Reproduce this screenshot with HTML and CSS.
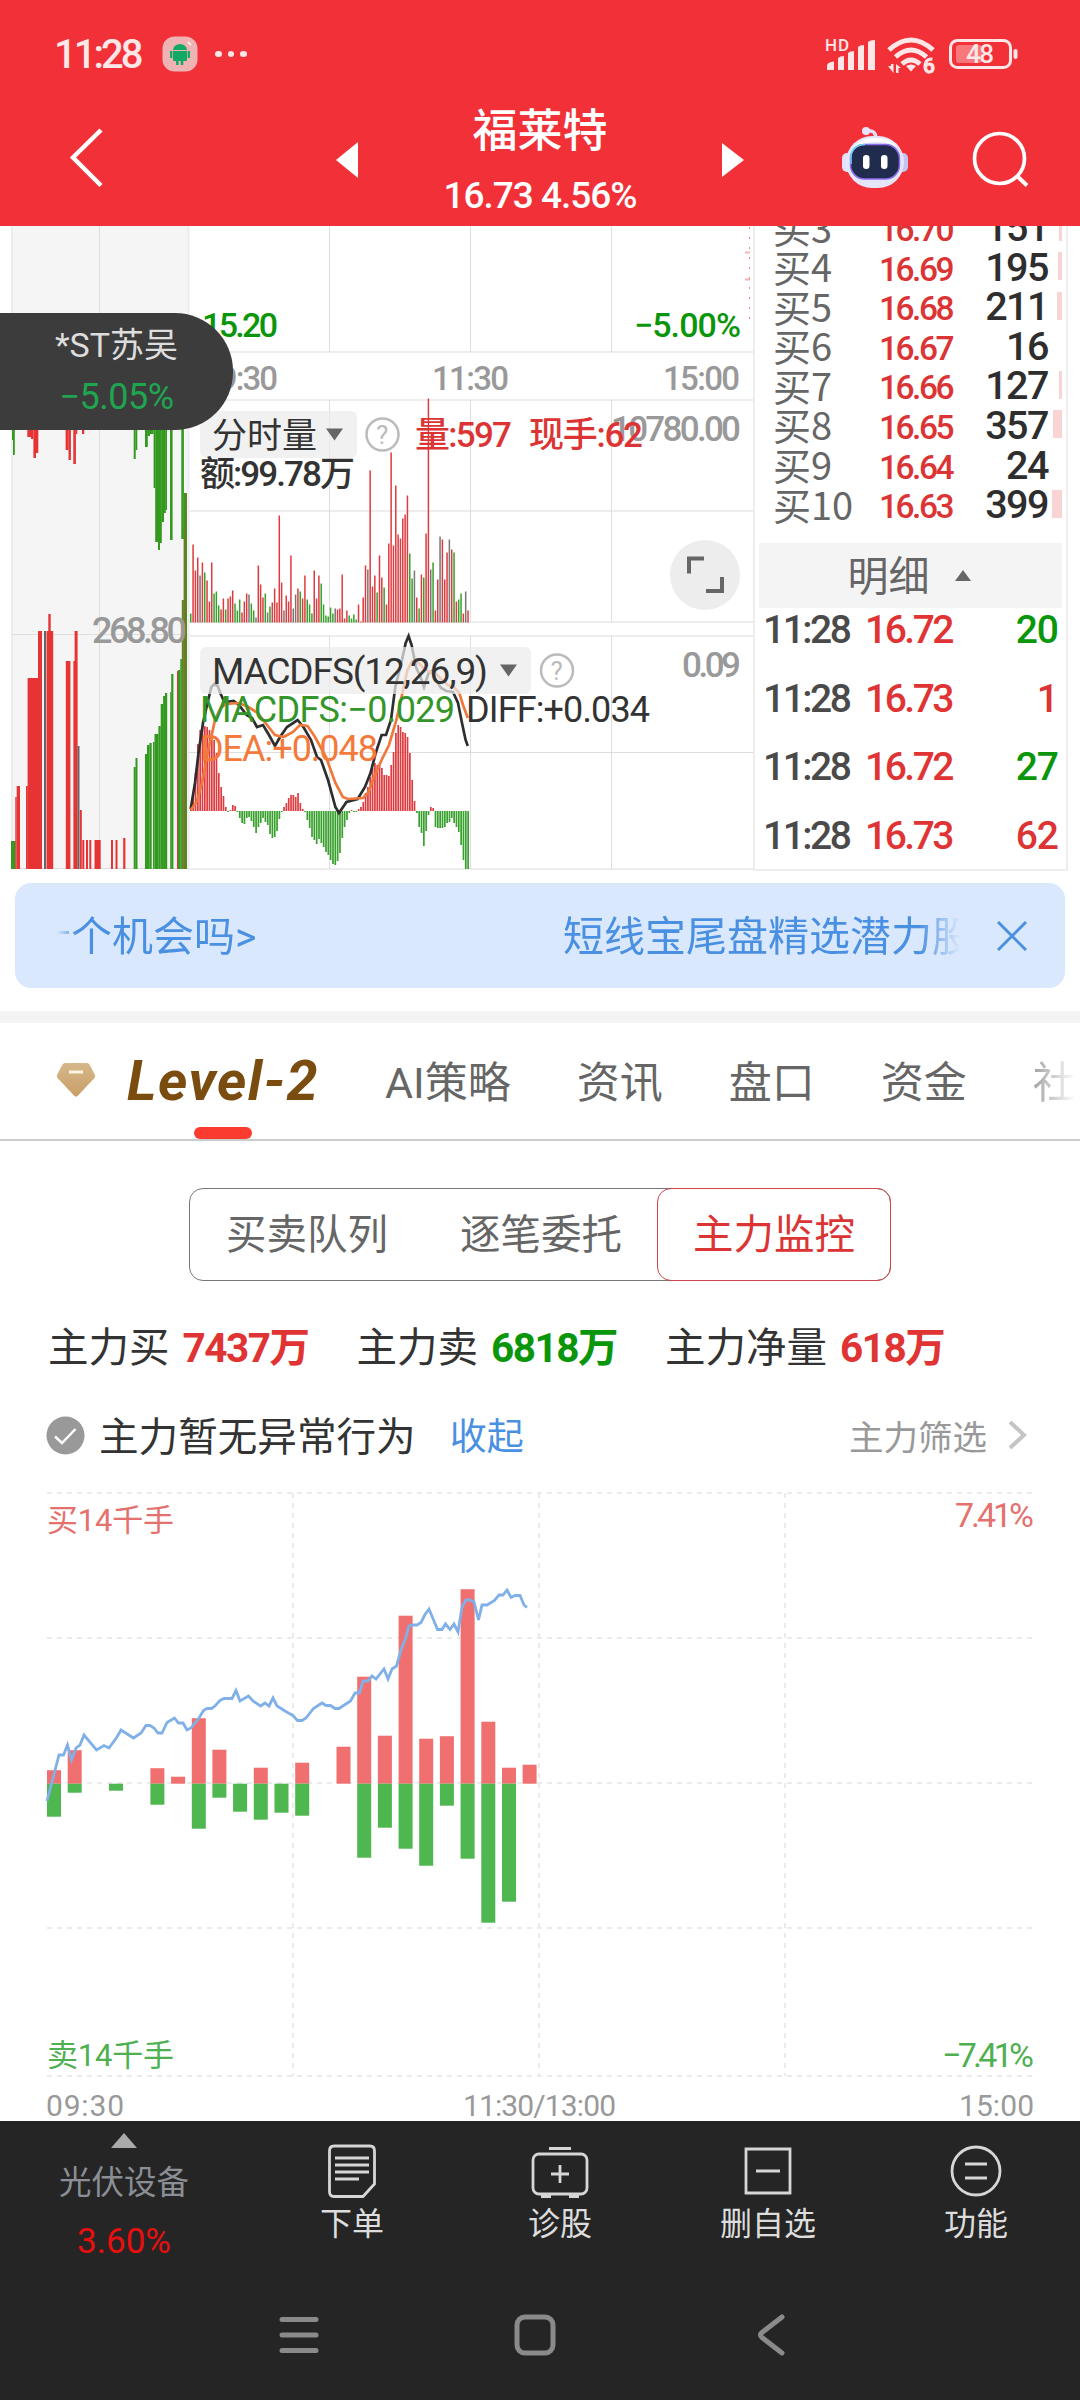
FILE: index.html
```html
<!DOCTYPE html>
<html lang="zh-CN">
<head>
    <meta charset="UTF-8">
    <meta name="viewport" content="width=device-width, initial-scale=1.0">
    <title>福莱特 16.73</title>
    <link rel="stylesheet" href="styles.css">
</head>
<body>
    <header class="header">
        <div class="status-bar">
            <div class="status-left">
                <span class="clock">11:28</span>
                <svg class="app-badge" width="36" height="36" viewBox="0 0 36 36">
                    <rect x="0.5" y="0.5" width="35" height="35" rx="12" fill="#efb3b4"/>
                    <path d="M11 14a7 6 0 0 1 14 0z M11 15h14v9q0 1-1 1H12q-1 0-1-1z M8 15h2.300v7H8z M25.700 15H28v7h-2.300z M14 24h2.600v5H14z M18.700 24h2.600v5h-2.600z" fill="#12a866"/>
                    <path d="M26 6l3 3" stroke="#fff" stroke-width="1.500"/>
                </svg>
                <span class="more"><i></i><i></i><i></i></span>
            </div>
            <svg class="status-icons" width="196" height="40" viewBox="824 34 196 40">
                <text class="hd" x="825" y="51" textLength="24">HD</text>
                <path d="M827 70v-4q0-4 7-4.500v8.500z M838 70V58q2-2 6-2v14z M848 70V53q2-2 6-2v19z M858 70V47q2-2 6-2v25z M868 70V42q2-2 7-2v30z" fill="#ffe6e7"/>
                <g fill="none" stroke="#ffe6e7" stroke-width="5">
                    <path d="M889 50q22-20 44 0"/>
                    <path d="M895.500 57q15.500-14 31 0"/>
                    <path d="M902 64q9-8 18 0"/>
                </g>
                <path d="M906 66q5-3 10 0l-5 5.500z M888 66h3v-2h2.500v9z M896 64l5 4h-2.500v5H896z" fill="#ffe6e7"/>
                <text class="six" x="923" y="73">6</text>
                <rect x="950.500" y="40.500" width="60" height="27" rx="7" fill="none" stroke="#ffe6e7" stroke-width="3"/>
                <rect x="956" y="45" width="26" height="18" rx="3" fill="#f7777b"/>
                <rect x="1013.500" y="49" width="4" height="10" rx="2" fill="#ffe6e7"/>
                <text class="battery-text" x="966" y="63" textLength="28">48</text>
            </svg>
        </div>
        <div class="title-bar">
            <svg class="back" width="36" height="64" viewBox="68 125 36 64"><path d="M101 130L73 157.500L101 185.500" fill="none" stroke="#fff" stroke-width="4.500"/></svg>
            <svg class="prev" width="22" height="36" viewBox="0 0 22 36"><path d="M0 18L22 0V36z" fill="#fff"/></svg>
            <div class="stock">
                <h1>福莱特</h1>
                <p>16.73 4.56%</p>
            </div>
            <svg class="next" width="22" height="36" viewBox="0 0 22 36"><path d="M22 18L0 1V35z" fill="#fff"/></svg>
            <svg class="robot" width="68" height="64" viewBox="841 126 68 64">
                <path d="M866 131q10-2 10 8" fill="none" stroke="#e6e3f8" stroke-width="3.500"/>
                <circle cx="866" cy="131" r="4" fill="#e9e4fb"/>
                <rect x="842" y="153" width="12" height="19" rx="5" fill="#e3e2fa"/>
                <rect x="896" y="153" width="12" height="19" rx="5" fill="#c3c3f5"/>
                <rect x="846" y="136" width="58" height="52" rx="26" fill="#e6e6fb"/>
                <path d="M851 152q6-14 24-14q16 0 22 9q-8-5-22-5q-15 0-24 10z" fill="#fff"/>
                <rect x="850.500" y="144.500" width="49" height="34.500" rx="14" fill="#202b4e" stroke="#8a6cf0" stroke-width="1.500"/>
                <path d="M851 164v-6q0-13 14-13.500" fill="none" stroke="#6ad5ee" stroke-width="1.500"/>
                <rect x="863" y="155" width="6.500" height="14" rx="3.200" fill="#fff"/>
                <rect x="881" y="155" width="6.500" height="14" rx="3.200" fill="#fff"/>
            </svg>
            <svg class="search" width="58" height="58" viewBox="971 131 58 58"><circle cx="999.500" cy="158.500" r="25" fill="none" stroke="#fff" stroke-width="3.700"/><path d="M1017 176L1027 185.500" stroke="#fff" stroke-width="4"/></svg>
        </div>
    </header>

    <section class="quote">
        <svg class="quote-chart" width="753" height="648" viewBox="0 226 753 648">
            <rect x="12" y="226" width="176" height="643" fill="#f5f5f5"/>
            <path d="M12 226V869 M188.500 226V869" class="grid-thick"/>
            <path d="M99.500 226V869 M12 634.500H188 M12 868.500H188" class="grid"/>
            <path d="M188 352H753 M188 400H753 M188 511H753 M188 622H753 M188 636H753 M188 869H753" class="grid-thick"/>
            <path d="M329.500 226V352 M470.500 226V352 M611.500 226V352 M329.500 400V622 M470.500 400V622 M611.500 400V622 M329.500 636V869 M470.500 636V869 M611.500 636V869 M188 752.500H753" class="grid"/>
            <path d="M745 252.500h5 M745 279.500h5" stroke="#f7b0b3" stroke-width="2"/>
            <path d="M749.500 227V322" stroke="#f08a8f" stroke-dasharray="2 8"/>
            <g id="kline"></g>
            <text class="t-gray" x="92" y="643" font-size="36" textLength="95">268.80</text>
            <g id="volume"></g>
            <g id="macd"></g>

            <text class="t-green" x="202" y="337" font-size="34" textLength="76">15.20</text>
            <text class="t-green" x="634" y="337" font-size="34" textLength="107">−5.00%</text>
            <text class="t-gray" x="202" y="389.500" font-size="33" textLength="76">09:30</text>
            <text class="t-gray" x="432" y="389.500" font-size="33" textLength="77">11:30</text>
            <text class="t-gray" x="663" y="389.500" font-size="33" textLength="77">15:00</text>
            <text class="t-gray" x="611" y="441" font-size="35" textLength="130">10780.00</text>
            <text class="t-gray" x="682" y="677" font-size="35" textLength="59">0.09</text>

            <rect x="200" y="411" width="157" height="47" rx="6" class="tag"/>
            <text class="t-dark" x="212" y="448" font-size="35" textLength="105">分时量</text>
            <path d="M326 428.500h17l-8.500 12z" class="caret"/>
            <circle cx="382.500" cy="434.500" r="16" class="help"/>
            <text class="help-mark" x="376" y="444">?</text>
            <text class="t-red" x="415" y="447" font-size="35" textLength="97">量:597</text>
            <text class="t-red" x="529" y="447" font-size="35" textLength="114">现手:62</text>
            <text class="t-dark bolder" x="200" y="486" font-size="35" textLength="155">额:99.78万</text>

            <rect x="200" y="647" width="331" height="47" rx="6" class="tag"/>
            <text class="t-dark" x="212" y="684" font-size="37" textLength="276">MACDFS(12,26,9)</text>
            <path d="M500 664.500h17l-8.500 12z" class="caret"/>
            <circle cx="557" cy="670.500" r="16" class="help"/>
            <text class="help-mark" x="550.500" y="680">?</text>
            <text class="t-macd" x="200" y="722" font-size="36" textLength="255">MACDFS:−0.029</text>
            <text class="t-dark" x="466" y="722" font-size="36" textLength="184">DIFF:+0.034</text>
            <text class="t-orange" x="200" y="761" font-size="36" textLength="178">DEA:+0.048</text>

            <circle cx="705" cy="575" r="35" fill="#ededed"/>
            <path d="M704 558.500H689V573.500 M706 591H722V577" fill="none" stroke="#666" stroke-width="4"/>
        </svg>

        <div class="book">
            <div class="book-rows">
                <div class="book-row"><span class="lv">买3</span><span class="price">16.70</span><span class="qty">151</span><i class="depth" style="width: 3px"></i></div>
                <div class="book-row"><span class="lv">买4</span><span class="price">16.69</span><span class="qty">195</span><i class="depth" style="width: 4px"></i></div>
                <div class="book-row"><span class="lv">买5</span><span class="price">16.68</span><span class="qty">211</span><i class="depth" style="width: 5px"></i></div>
                <div class="book-row"><span class="lv">买6</span><span class="price">16.67</span><span class="qty">16</span><i class="depth" style="width: 0"></i></div>
                <div class="book-row"><span class="lv">买7</span><span class="price">16.66</span><span class="qty">127</span><i class="depth" style="width: 3px"></i></div>
                <div class="book-row"><span class="lv">买8</span><span class="price">16.65</span><span class="qty">357</span><i class="depth" style="width: 9px"></i></div>
                <div class="book-row"><span class="lv">买9</span><span class="price">16.64</span><span class="qty">24</span><i class="depth" style="width: 0"></i></div>
                <div class="book-row"><span class="lv">买10</span><span class="price">16.63</span><span class="qty">399</span><i class="depth" style="width: 10px"></i></div>
            </div>
            <div class="detail-head">明细 <i class="up"></i></div>
            <div class="trades">
                <div class="trade"><span>11:28</span><b>16.72</b><em class="sell">20</em></div>
                <div class="trade"><span>11:28</span><b>16.73</b><em>1</em></div>
                <div class="trade"><span>11:28</span><b>16.72</b><em class="sell">27</em></div>
                <div class="trade"><span>11:28</span><b>16.73</b><em>62</em></div>
            </div>
        </div>

        <div class="float-pill">
            <p class="pill-name">*ST苏吴</p>
            <p class="pill-rate">−5.05%</p>
        </div>
    </section>

    <section class="notice">
        <div class="marquee">
            <span class="dash"></span>
            <span>个机会吗&gt;</span>
            <span class="second">短线宝尾盘精选潜力股</span>
        </div>
        <svg width="30" height="30" viewBox="0 0 30 30"><path d="M1 1L29 29M29 1L1 29" stroke="#4a8fe0" stroke-width="3"/></svg>
    </section>

    <nav class="tabs">
        <div class="tab level active">
            <svg width="40" height="44" viewBox="0 0 40 44">
                <defs>
                    <linearGradient id="gem" x1="0" y1="0" x2="0" y2="1">
                        <stop offset="0" stop-color="#d6b78a"/>
                        <stop offset="1" stop-color="#c99f68"/>
                    </linearGradient>
                </defs>
                <path d="M9 4H31Q32.500 4 33.500 5.500L39 16Q39.500 18 38.500 19L21.500 37Q20 38 18.500 37L1.500 19Q0.500 18 1 16L6.500 5.500Q7.500 4 9 4z" fill="url(#gem)"/>
                <path d="M13 13H27" stroke="#fff3e2" stroke-width="3"/>
            </svg>
            <span>Level-2</span>
        </div>
        <div class="tab">AI策略</div>
        <div class="tab">资讯</div>
        <div class="tab">盘口</div>
        <div class="tab">资金</div>
        <div class="tab faded">社</div>
    </nav>

    <main class="monitor">
        <div class="segment">
            <div class="seg">买卖队列</div>
            <div class="seg">逐笔委托</div>
            <div class="seg on">主力监控</div>
        </div>
        <div class="stats">
            <p>主力买<b class="red">7437万</b></p>
            <p>主力卖<b class="green">6818万</b></p>
            <p>主力净量<b class="red">618万</b></p>
        </div>
        <div class="behavior">
            <svg width="39" height="39" viewBox="0 0 39 39"><circle cx="19.500" cy="19.500" r="19" fill="#999"/><path d="M9 20.500L16 27L29.500 13" fill="none" stroke="#fff" stroke-width="2.500"/></svg>
            <span class="behavior-text">主力暂无异常行为</span>
            <a class="fold">收起</a>
            <span class="filter">主力筛选</span>
            <svg width="20" height="28" viewBox="0 0 20 28"><path d="M2 1L16 14L2 27" fill="none" stroke="#c4c4c4" stroke-width="4"/></svg>
        </div>
        <svg class="flow-chart" width="1080" height="641" viewBox="0 1480 1080 641">
            <path class="dash-grid" d="M47 1493H1033 M47 1638H1033 M47 1783H1033 M47 1928H1033 M47 2076H1033"/>
            <path class="dash-grid" d="M293 1493V2076 M539 1493V2076 M785 1493V2076"/>
            <g id="flow"></g>
            <text class="buy" x="47" y="1531" font-size="31" textLength="127">买14千手</text>
            <text class="buy" x="955" y="1527" font-size="34" textLength="79">7.41%</text>
            <text class="sell-t" x="47" y="2066" font-size="31" textLength="127">卖14千手</text>
            <text class="sell-t" x="942" y="2067" font-size="34" textLength="92">−7.41%</text>
            <text class="axis" x="46" y="2115.500" font-size="30" textLength="78">09:30</text>
            <text class="axis" x="463" y="2115.500" font-size="30" textLength="153">11:30/13:00</text>
            <text class="axis" x="959" y="2115.500" font-size="30" textLength="75">15:00</text>
        </svg>
    </main>

    <footer class="footer">
        <div class="toolbar">
            <div class="sector">
                <i class="tri"></i>
                <span class="sector-name">光伏设备</span>
                <span class="sector-rate">3.60%</span>
            </div>
            <div class="tool">
                <svg width="60" height="60" viewBox="-30 -30 60 60"><path d="M-18 -25H18Q22.500 -25 22.500 -20V13L11 25.500H-18Q-22.500 25.500 -22.500 20.500V-20Q-22.500 -25 -18 -25z M-17 -13H17 M-17 -6H17 M-17 1H17 M-17 8H7"/></svg>
                <span>下单</span>
            </div>
            <div class="tool">
                <svg width="60" height="60" viewBox="-30 -30 60 60"><rect x="-27" y="-17" width="54" height="40" rx="6"/><path d="M-11 -22.500H11 M-19 25.500H-9 M9 25.500H19 M-9 3H9 M0 -6V12"/></svg>
                <span>诊股</span>
            </div>
            <div class="tool">
                <svg width="60" height="60" viewBox="-30 -30 60 60"><path d="M-22 -22H22V22H-22z M-12 0H12"/></svg>
                <span>删自选</span>
            </div>
            <div class="tool">
                <svg width="60" height="60" viewBox="-30 -30 60 60"><circle r="24"/><path d="M-11 -7H11 M-11 7H11"/></svg>
                <span>功能</span>
            </div>
        </div>
        <div class="sys-nav">
            <svg width="40" height="44" viewBox="0 0 40 44"><path d="M3 6.500H37 M3 22H37 M3 37.500H37"/></svg>
            <svg width="44" height="44" viewBox="0 0 44 44"><rect x="4" y="4" width="36" height="36" rx="8"/></svg>
            <svg width="30" height="44" viewBox="0 0 30 44"><path d="M26 4L6 19.500Q3 22 6 24.500L26 40"/></svg>
        </div>
    </footer>

    <script src="charts.js"></script>
</body>
</html>
```
FILE: styles.css
```css
* {
    margin: 0;
    padding: 0;
    box-sizing: border-box;
}
body {
    width: 1080px;
    height: 2400px;
    overflow: hidden;
    background: #fff;
    font-family: Roboto, "Noto Sans CJK SC", sans-serif;
    color: #333;
}
i, em {
    font-style: normal;
}
svg {
    display: block;
    flex: none;
}

/* header */
.header {
    height: 226px;
    background: #f23038;
    color: #fff;
}
.status-bar {
    height: 84px;
    padding: 24px 60px 0 54px;
    display: flex;
    justify-content: space-between;
    align-items: center;
}
.status-left {
    display: flex;
    align-items: center;
    height: 60px;
}
.clock {
    width: 108px;
    font-size: 40px;
    font-weight: 500;
    letter-spacing: -3px;
    color: #ffe6e7;
}
.more {
    display: flex;
    gap: 6px;
    margin-left: 17px;
}
.more i {
    width: 6.500px;
    height: 6.500px;
    border-radius: 50%;
    background: #ffe6e7;
}
.status-icons text {
    fill: #ffe6e7;
    font-weight: 500;
}
.hd { font-size: 17px; }
.six { font-size: 21px; stroke: #ffe6e7; }
.battery-text { font-size: 26px; }
.title-bar {
    height: 142px;
    padding: 0 51px 0 68px;
    display: flex;
    align-items: flex-start;
}
.back { margin-top: 41px; }
.prev { margin: 58px 0 0 232px; }
.stock {
    width: 364px;
    text-align: center;
}
.stock h1 {
    margin-top: 18px;
    line-height: 60px;
    font-size: 45px;
    font-weight: 500;
}
.stock p {
    margin-top: 13px;
    line-height: 42px;
    font-size: 37px;
    font-weight: 500;
    letter-spacing: -1px;
}
.next { margin-top: 58px; }
.robot { margin: 42px 0 0 97px; }
.search { margin: 47px 0 0 62px; }

/* quote area */
.quote {
    position: relative;
    display: flex;
    height: 648px;
    overflow: hidden;
}
.grid, .grid-thick {
    fill: none;
    stroke: #dedede;
    stroke-width: 1;
}
.grid-thick {
    stroke: #ededed;
    stroke-width: 2;
}
.t-gray { fill: #999; font-weight: 500; }
.t-green { fill: #0a960a; font-weight: 500; }
.t-red { fill: #dc3434; font-weight: 500; }
.t-dark { fill: #333; }
.bolder { font-weight: 500; }
.t-macd { fill: #34962a; }
.t-orange { fill: #f47a3c; }
.quote-chart text, .flow-chart text {
    white-space: pre;
}
.tag { fill: #ececec; fill-opacity: 0.72; }
.caret { fill: #666; }
.help { fill: none; stroke: #bbb; stroke-width: 2.500; }
.help-mark { fill: #bbb; font-size: 26px; }

.book {
    width: 315px;
    height: 645px;
    border: 2px solid #eee;
    border-top: 0;
    padding: 0 4px;
    overflow: hidden;
}
.book-rows {
    margin-top: -20px;
}
.book-row {
    display: grid;
    grid-template-columns: 14px 106px 91px 1fr 14px;
    align-items: center;
    height: 39.600px;
    white-space: nowrap;
}
.lv {
    grid-column: 2;
    font-size: 38px;
    font-family: "Noto Sans CJK SC", sans-serif;
    line-height: 36px;
    color: #666;
}
.price {
    padding-top: 6px;
    font-size: 33.500px;
    line-height: 35px;
    letter-spacing: -2.500px;
    font-weight: 500;
    color: #dc3434;
}
.qty {
    padding-top: 2px;
    text-align: right;
    font-size: 39.500px;
    line-height: 37px;
    letter-spacing: -1.500px;
    font-weight: 500;
    color: #2e2e2e;
}
.depth {
    justify-self: end;
    height: 28px;
    background: #f9d4d5;
}
.detail-head {
    margin-top: 20px;
    height: 65px;
    padding: 0 3px 4px 0;
    display: flex;
    align-items: center;
    justify-content: center;
    gap: 25px;
    background: #f4f4f4;
    font-size: 41px;
    color: #666;
}
.up {
    margin-top: 4px;
    border: 8px solid transparent;
    border-top: 0;
    border-bottom: 11px solid #666;
}
.trade {
    display: grid;
    grid-template-columns: 102px 100px 1fr;
    height: 68.750px;
    padding: 0 4px 0 4px;
    line-height: 44px;
    font-size: 39px;
    font-weight: 500;
    letter-spacing: -2.500px;
    color: #4a4a4a;
}
.trade b {
    font-weight: 500;
    color: #e03434;
}
.trade em {
    text-align: right;
    letter-spacing: -1px;
    color: #dc3434;
}
.trade .sell { color: #0a960a; }

/* floating ticker over the chart */
.float-pill {
    position: absolute;
    left: 0;
    top: 87px;
    width: 233px;
    height: 117px;
    padding-top: 7px;
    border-radius: 0 58px 58px 0;
    background: #3c3c3c;
    text-align: center;
}
.pill-name {
    line-height: 50px;
    font-size: 34px;
    color: #ddd;
}
.pill-rate {
    line-height: 54px;
    font-size: 36px;
    letter-spacing: -0.500px;
    color: #1fa550;
}

/* notice */
.notice {
    display: flex;
    align-items: center;
    justify-content: space-between;
    width: 1050px;
    height: 105px;
    margin: 9px 15px 0;
    padding: 0 38px 0 42px;
    border-radius: 16px;
    background: #d9e8fc;
}
.marquee {
    display: flex;
    align-items: center;
    width: 903px;
    padding-bottom: 6px;
    overflow: hidden;
    white-space: nowrap;
    font-size: 41px;
    color: #4a90e2;
    -webkit-mask-image: linear-gradient(90deg, transparent, #000 20px, #000 862px, transparent 903px);
    mask-image: linear-gradient(90deg, transparent, #000 20px, #000 862px, transparent 903px);
}
.dash {
    width: 12px;
    height: 3px;
    margin-right: 2px;
    background: #4a90e2;
}
.second {
    margin-left: auto;
    margin-right: -13px;
}

/* tabs */
.tabs {
    display: flex;
    align-items: center;
    height: 130px;
    margin-top: 23px;
    padding-left: 56px;
    border-top: 12px solid #f4f4f4;
    border-bottom: 2px solid #ccc;
    overflow: hidden;
    white-space: nowrap;
    font-size: 43px;
    color: #666;
}
.tab {
    display: flex;
    align-items: center;
    justify-content: center;
    height: 100%;
    margin-right: 66px;
    padding-bottom: 5px;
    flex: none;
}
.level {
    position: relative;
    width: 263px;
    padding-bottom: 0;
    justify-content: flex-start;
    gap: 31px;
    font-size: 56px;
    font-weight: 700;
    font-style: italic;
    letter-spacing: 1.500px;
    color: #7a4c10;
}
.level::after {
    content: '';
    position: absolute;
    left: 138px;
    bottom: 0;
    width: 58px;
    height: 12px;
    border-radius: 6px;
    background: #fb3a30;
}
.faded {
    -webkit-mask-image: linear-gradient(90deg, rgba(0, 0, 0, 0.6), transparent);
    mask-image: linear-gradient(90deg, rgba(0, 0, 0, 0.6), transparent);
}

/* main force monitor */
.segment {
    display: flex;
    width: 702px;
    height: 93px;
    margin: 47px auto 0;
    border: 1.500px solid #777;
    border-radius: 14px;
    font-size: 40.500px;
    color: #666;
}
.seg {
    width: 234px;
    line-height: 92px;
    text-align: center;
}
.seg.on {
    margin: -1px;
    border: 1.500px solid #d04548;
    border-radius: 14px;
    color: #dc3434;
}
.stats {
    display: flex;
    height: 60px;
    margin-top: 37px;
    padding-left: 48px;
    line-height: 60px;
    font-size: 40.500px;
}
.stats p {
    width: 308.500px;
    white-space: nowrap;
}
.stats b {
    margin-left: 13px;
    font-weight: 700;
    letter-spacing: -1.500px;
}
.red { color: #e03434; }
.green { color: #0a960a; }
.behavior {
    display: flex;
    align-items: center;
    height: 60px;
    margin-top: 27px;
    padding: 0 52px 0 46px;
}
.behavior-text {
    margin-left: 14px;
    padding-bottom: 3px;
    font-size: 39.600px;
}
.fold {
    margin-left: 34px;
    padding-bottom: 2px;
    font-size: 37px;
    color: #4a90e2;
}
.filter {
    margin: 0 21px 0 auto;
    font-size: 34.500px;
    color: #999;
}
.flow-chart { margin-top: 15px; }
.dash-grid {
    fill: none;
    stroke: #ebebeb;
    stroke-width: 2;
    stroke-dasharray: 5 5;
}
.buy { fill: #e5716e; }
.sell-t { fill: #4fb052; }
.axis { fill: #999; }

/* footer */
.footer {
    height: 279px;
    background: #252525;
}
.toolbar {
    display: flex;
    height: 160px;
}
.sector {
    display: flex;
    flex-direction: column;
    align-items: center;
    width: 248px;
    padding-top: 12px;
}
.tri {
    border: 13px solid transparent;
    border-top: 0;
    border-bottom: 15px solid #aaa;
}
.sector-name {
    margin-top: 10px;
    line-height: 50px;
    font-size: 32.500px;
    color: #8b8e94;
}
.sector-rate {
    margin-top: 9px;
    line-height: 50px;
    font-size: 35px;
    color: #e80f10;
}
.tool {
    display: flex;
    flex-direction: column;
    align-items: center;
    width: 208px;
    padding-top: 20px;
    font-size: 32px;
    line-height: 47px;
    color: #ddd;
}
.tool svg {
    fill: none;
    stroke: #d6d6d6;
    stroke-width: 2.800;
}
.sys-nav {
    display: grid;
    grid-template-columns: 234px 243px 30px;
    margin: 32px 0 0 279px;
    fill: none;
    stroke: #8a8a8a;
    stroke-width: 5;
    stroke-linecap: round;
}
```
FILE: charts.js
```js
const RED = '#dd3b3f', GREEN = '#38a02c', GRAY = '#777';

function rect(x, y, w, h, fill) {
    return `<rect x="${x}" y="${y}" width="${w}" height="${h}" fill="${fill}"/>`;
}

// left mini chart: [x, width, top, bottom, color]
const R = '#e63434', G = '#339a1f', D = '#666';
const kline = [
    [11, 4.7, 841, 869, G], [15.3, 1.4, 797, 869, R], [16.7, 3.3, 786, 869, R],
    [26, 1.8, 786, 869, R], [27.6, 10.6, 678, 869, R], [38, 4, 631, 869, R],
    [44, 2, 631, 869, D], [46.5, 6.7, 631, 869, R], [48.3, 2.4, 614, 640, R],
    [65.8, 4.6, 661, 869, R], [73.4, 1.6, 661, 869, R], [74.6, 3, 631, 869, R],
    [77.5, 2, 746, 869, D], [79.8, 2, 810, 869, R], [82.3, 2, 840, 869, R],
    [86, 2, 840, 869, R], [89.3, 2, 840, 869, R], [94.5, 6.2, 840, 869, R],
    [111, 2, 840, 869, R], [115.5, 2, 840, 869, R], [123.2, 2.2, 838, 869, R],
    [133.7, 2, 767, 869, G], [135.5, 2, 758, 869, G], [145, 2, 754, 869, G],
    [147, 2.5, 745, 869, G], [149.4, 2.3, 743, 869, G], [153, 1.5, 742, 869, G],
    [154.5, 4, 734, 869, G], [158.4, 2.3, 726, 869, G], [160.7, 2.6, 704, 869, G],
    [163.1, 2.2, 696, 869, G], [165, 2.2, 693, 869, G], [170.2, 1.2, 692, 869, G],
    [171.2, 2.2, 674, 869, G], [177, 1, 671, 869, R], [178, 2.4, 670, 869, G],
    [180.3, 1.6, 659, 869, G], [181.8, 2, 600, 869, G], [183.6, 3.4, 527, 869, '#5d8522'],
    [12, 1, 429, 440, G], [13, 1.8, 429, 455, G],
    [27.3, 3.7, 429, 437, R], [31, 2.4, 429, 439, R], [33.4, 2.6, 429, 458, R], [36, 2.3, 429, 453, R],
    [65.6, 3, 429, 450, R], [68.5, 2.4, 429, 460, R], [73.3, 2.6, 429, 464, R], [76, 1.3, 429, 434, R], [82, 2.3, 429, 434, R],
    [133.7, 2, 429, 459, G], [135.7, 1.6, 429, 450, G], [145, 2.8, 429, 447, G], [147.6, 2.4, 429, 436, G],
    [150, 3.6, 429, 434, G], [153.6, 1.8, 429, 488, G], [155.2, 3, 429, 542, G], [158, 2, 429, 550, G],
    [159.8, 2, 429, 543, G], [161.6, 2.4, 429, 522, G], [164, 1.8, 429, 513, G], [165.6, 1.4, 429, 510, G],
    [170, 2.6, 429, 540, G], [181.3, 2.6, 429, 539, G], [184, 3, 493, 869, '#4f8b22'],
    [182.6, 1, 600, 869, '#9b6a2c'], [184.8, 0.8, 527, 869, '#8a6a2c']
];
document.getElementById('kline').innerHTML =
    kline.map(([x, w, top, bottom, c]) => rect(x, top, w, bottom - top, c)).join('');

// minute volume, bar height in px; r = up, g = down, d = flat
const volume = 'g9 r78 r52 r65 d47 r60 g50 r42 r21 r60 g29 g31 g17 r13 r24 g13 r24 r26 r32 g19 g12 g23 r10 r21 r29 d28 g19 g12 d5 r57 r38 r25 g29 d10 g16 r20 r34 r20 r107 r40 d12 r27 r21 r67 d14 d28 r34 g31 r24 r47 g23 g18 g9 r52 r24 r47 g39 g18 g7 g6 g15 g9 d14 r13 r14 r48 r4 r12 g7 g4 g8 g3 r18 r1 r25 r57 d53 r152 r36 r47 g30 r67 r45 g35 r18 r79 r170 r77 r137 r88 r84 r104 r108 r127 g69 g44 d52 r25 g14 r48 g45 r89 r224 d53 g60 r12 r43 d86 r83 r43 r70 d83 r73 g70 r21 g23 g29 r9 d31 r12'.split(' ');
const color = { r: RED, g: GREEN, d: GRAY };
const step = 2.33;
document.getElementById('volume').innerHTML = volume.map((v, i) => {
    const h = +v.slice(1);
    const c = color[v[0]];
    return rect((190 + i * step).toFixed(2), 622.5 - h, 1.5, h, c);
}).join('');

// MACD histogram around the zero line
const macd = [3, 14, 38, 67, 81, 84, 85, 84, 81, 78, 71, 58, 38, 24, 15, 4, -1, 1, 6, 5, -1, -7, -12, -13, -7, -6, -10, -16, -22, -16, -12, -7, -11, -14, -23, -27, -26, -20, -8, -1, 4, 8, 13, 16, 16, 14, 18, 8, 2, -1, -9, -17, -26, -29, -33, -28, -32, -36, -41, -44, -49, -53, -54, -50, -42, -27, -16, -9, -2, 1, -1, -1, 2, 4, 9, 18, 24, 34, 43, 48, 46, 46, 43, 36, 36, 35, 46, 59, 78, 86, 84, 79, 78, 74, 58, 31, 10, -2, -16, -22, -35, -20, -4, 4, 3, -16, -17, -17, -17, -16, -12, -11, -7, -12, -16, -21, -34, -49, -58, -58];
const zero = 811;
const diff = '190.7,809 195,783 198.500,753 203,723 207.700,702 211.400,687 214.400,684 217.700,686 220.700,694 224.400,702 233.600,701 239,705 246.600,715 252,718 257,727 263,725 269,735 275,746 280,737 287,727 297.600,720 304,728 311,740 317,757 321,760 328,780 335.400,807 339,813 346.500,802 357.600,799 365,787 370.500,773 376,752 381.600,735 386,735 391,720 395.300,687 402,660 405.700,643 408.600,636 411.600,645 416,667 420.500,677 424,687 428.600,673 432,671 436,680 441,688 446.400,691 453,692 458,703 462,723 465.600,740 467.800,746';
const dea = '190.700,810 196.600,802 202,783 207.700,753 215,720 220.700,708 226,704 239,703 248.400,707 257.700,713 267,725 275,735 283.600,737 293,732 300,725 307.600,726 315,737 326,757 335.400,783 342.800,797 348,799 363,798 368.700,792 374,777 381.600,760 389,745 396.400,720 402,695 407.500,670 412.300,661 416.800,661 422.300,667 429.700,672 435.300,673 441,679 448,685 453.800,687 459.300,693 463,705 467.800,718';
document.getElementById('macd').innerHTML = macd.map((v, i) => {
    const x = (190 + i * step).toFixed(2);
    return v > 0 ? rect(x, zero - v, 1.7, v, RED) : rect(x, zero, 1.7, -v, GREEN);
}).join('') +
    `<polyline points="${diff}" fill="none" stroke="#2e2e2e" stroke-width="2.700"/>` +
    `<polyline points="${dea}" fill="none" stroke="#f0783c" stroke-width="2.700"/>`;

// main force flow: [buy height, sell height] every five minutes
const flow = [[13.5, 33], [33.5, 9], [0, 0], [0, 7], [0, 0], [15.5, 21], [7, 0], [65.5, 45], [34, 14], [0, 28], [16, 36], [0, 29], [21, 32], [0, 0], [37, 0], [107, 74], [48, 44], [168, 65], [45, 82], [47.5, 22], [194.500, 75], [62, 139], [16, 118], [19, 0]];
const price = '47,1801 59,1755 63.500,1755 67.500,1745 71.500,1760 76,1748 80,1745 84,1735 96.500,1750 104,1745.500 109,1748 117,1737 121,1730 133.500,1738 141,1733 146,1725.500 150,1725.500 154,1728 158,1733 162,1733 167,1722.500 174.500,1718 178.500,1723 183,1723 187,1730 191,1728 199,1718 203.500,1710.500 207,1708.500 211.500,1708.500 215,1706 220,1700.500 224,1698.500 232,1698.500 236,1690.500 240,1701 248.500,1696 253,1701 260.500,1706 265,1703 269,1706 273,1698 277,1706 285,1711 293,1715.500 297.500,1720.500 302,1720.500 306,1718 313.500,1708.500 322,1703 326,1705.500 330.500,1705.500 335,1708.500 339,1708.500 350.500,1701 355,1693 359.500,1693 363,1681 368,1681 372,1676 376,1679 384,1669 388,1679 392,1669 396.500,1666 401,1650 405,1640 409,1626 413,1625 417,1625 421,1622.500 425,1614.500 429,1609 437.500,1629.500 442,1629.500 445.500,1624 450,1629.500 454,1624 458,1632 462,1607 466,1600 470,1600 474,1602 478.500,1620 482,1605 487,1605 494.500,1600.500 499,1595 503,1595 507,1590 511,1597.500 515,1595.500 520,1595.500 524,1605 527,1607.500';
document.getElementById('flow').innerHTML = flow.map(([buy, sell], i) => {
    const x = (47 + i * 20.68).toFixed(1);
    return rect(x, 1783.7 - buy, 14, buy, '#f07070') + rect(x, 1783.7, 14, sell, '#4fb74f');
}).join('') + `<polyline points="${price}" fill="none" stroke="#80b0e8" stroke-width="2.800"/>`;
```
